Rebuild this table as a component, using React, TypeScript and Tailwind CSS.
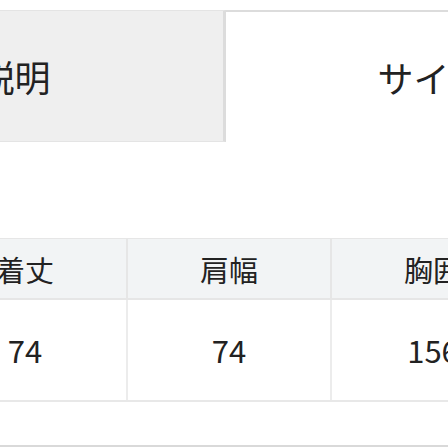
import React from 'react';

const columns = [
  { label: '着丈', value: '74' },
  { label: '肩幅', value: '74' },
  { label: '胸囲', value: '156' },
  { label: '袖丈', value: '60' },
];

const App: React.FC = () => {
  return (
    <div
      className="w-[448px] h-[448px] overflow-hidden bg-white text-[#222]"
      style={{ fontFamily: '"Noto Sans CJK JP", "Noto Sans", sans-serif' }}
    >
      {/* Tabs */}
      <div className="flex mt-[10px] -ml-[267px] w-[1000px]">
        <div className="w-[493px] h-[132px] shrink-0 flex items-center justify-center bg-[#efefef] border border-[#e4e4e4] border-r-[3px] border-r-[#dcdcdc] text-[36px]">
          商品説明
        </div>
        <div className="w-[410px] h-[132px] shrink-0 flex items-center justify-center bg-white border-t-2 border-[#dcdcdc] text-[36px]">
          サイズ
        </div>
      </div>

      {/* Size table */}
      <div className="mt-[96px] -ml-[76px] w-[900px]">
        <div className="flex h-[62px] bg-[#f2f4f5] border-t border-b-2 border-[#e6e6e6]">
          {columns.map((c) => (
            <div
              key={c.label}
              className="w-[204px] shrink-0 flex items-center justify-center border-r-2 border-[#e6e6e6] text-[29px] pt-[3px]"
            >
              {c.label}
            </div>
          ))}
        </div>
        <div className="flex h-[102px] border-b-2 border-[#e8e8e8]">
          {columns.map((c) => (
            <div
              key={c.label}
              className="w-[204px] shrink-0 flex items-center justify-center border-r-2 border-[#ececec] text-[31px]"
            >
              {c.value}
            </div>
          ))}
        </div>
        <div className="mt-[43px] border-t-2 border-[#d9d9d9]" />
      </div>
    </div>
  );
};

export default App;
